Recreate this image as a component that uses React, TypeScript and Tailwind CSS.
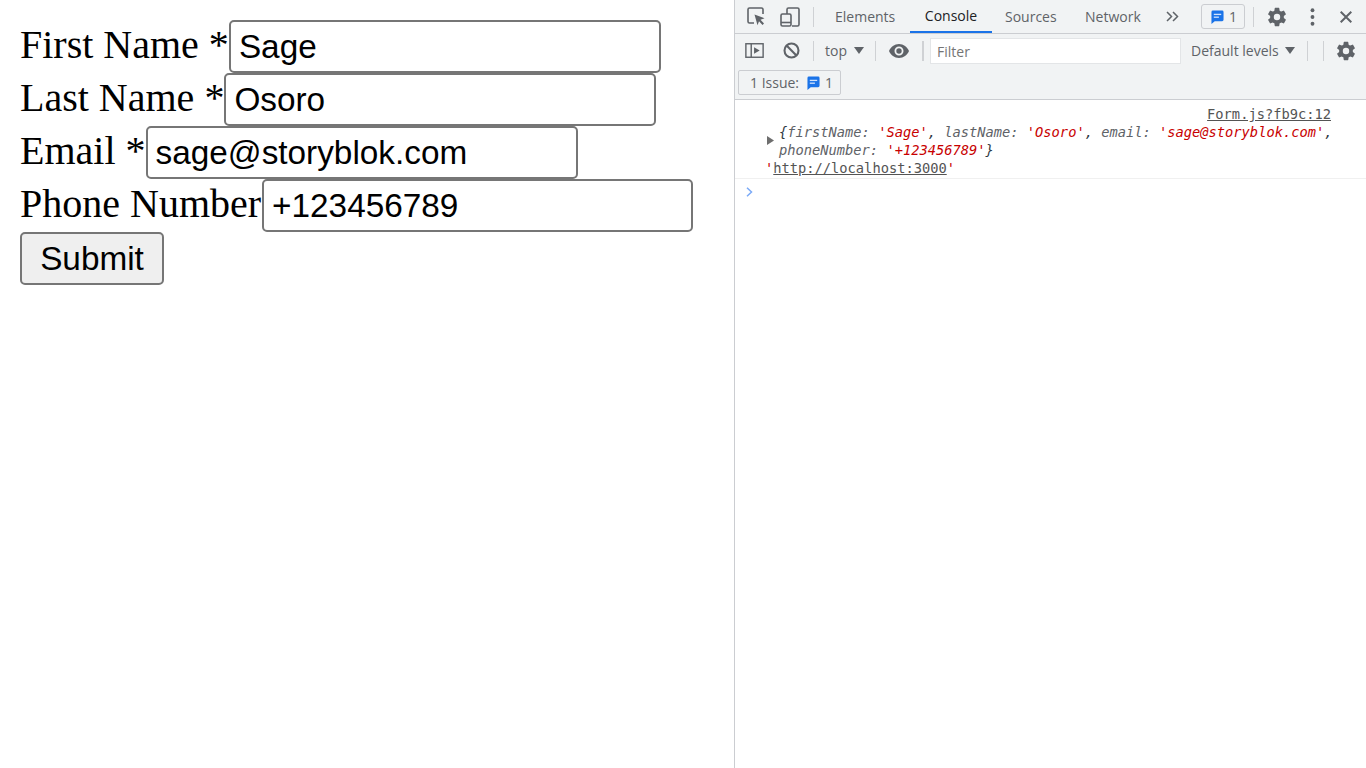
import React from "react";

const Msg = ({ className = "" }: { className?: string }) => (
  <svg viewBox="0 0 14 15" className={className}>
    <path d="M2 0.5h10a1.5 1.5 0 0 1 1.5 1.5v8.5a1.5 1.5 0 0 1-1.5 1.5H4l-3.5 3V2A1.5 1.5 0 0 1 2 0.5z" fill="#1a73e8" />
    <rect x="3" y="4" width="8" height="1.4" fill="#d2e3fc" />
    <rect x="3" y="7" width="5.5" height="1.4" fill="#d2e3fc" />
  </svg>
);

const Gear = ({ className = "" }: { className?: string }) => (
  <svg viewBox="0 0 24 24" className={className} fill="#5f6368">
    <path d="M19.43 12.98c.04-.32.07-.64.07-.98s-.03-.66-.07-.98l2.11-1.65a.5.5 0 0 0 .12-.64l-2-3.46a.5.5 0 0 0-.61-.22l-2.49 1a7.3 7.3 0 0 0-1.69-.98l-.38-2.65A.49.49 0 0 0 14 2h-4a.49.49 0 0 0-.49.42l-.38 2.65c-.61.25-1.17.59-1.69.98l-2.49-1a.49.49 0 0 0-.61.22l-2 3.46a.49.49 0 0 0 .12.64l2.11 1.65c-.04.32-.07.65-.07.98s.03.66.07.98l-2.11 1.65a.5.5 0 0 0-.12.64l2 3.46c.12.22.39.3.61.22l2.49-1c.52.4 1.08.73 1.69.98l.38 2.65c.03.24.24.42.49.42h4c.25 0 .46-.18.49-.42l.38-2.65c.61-.25 1.17-.59 1.69-.98l2.49 1c.23.09.49 0 .61-.22l2-3.46a.5.5 0 0 0-.12-.64l-2.11-1.65zM12 15.5a3.5 3.5 0 1 1 0-7 3.5 3.5 0 0 1 0 7z" />
  </svg>
);

const Sep = ({ ml, h = "h-[20px]", w = "w-px", color = "bg-[#cfd1d4]" }: { ml: string; h?: string; w?: string; color?: string }) => (
  <div className={`${ml} ${h} ${w} ${color} shrink-0`} />
);

const Field = ({ label, value, inputW }: { label: string; value: string; inputW: string }) => (
  <div className="flex items-center h-[53px]">
    <span className="text-[40px] leading-[49px] mb-[4px] text-black whitespace-nowrap">{label}</span>
    <input
      readOnly
      value={value}
      className={`${inputW} h-[53px] box-border border-2 border-[#767676] rounded-[5px] px-[8px] text-[33.33px] text-black bg-white outline-none font-['Liberation_Sans',sans-serif]`}
    />
  </div>
);

export default function App() {
  return (
    <div className="flex w-[1366px] h-[768px] overflow-hidden bg-white">
      <div className="w-[734px] shrink-0 pt-[20px] pl-[20px] font-['Liberation_Serif',serif]">
        <Field label="First Name *" value="Sage" inputW="w-[432px]" />
        <Field label="Last Name *" value="Osoro" inputW="w-[432px]" />
        <Field label="Email *" value="sage@storyblok.com" inputW="w-[432px]" />
        <Field label="Phone Number" value="+123456789" inputW="w-[431px] ml-[1px]" />
        <button className="w-[144px] h-[53px] box-border border-2 border-[#767676] rounded-[5px] bg-[#efefef] text-[33.33px] leading-none text-black font-['Liberation_Sans',sans-serif]">
          Submit
        </button>
      </div>

      <div className="w-[632px] shrink-0 border-l border-[#cbcdd1] flex flex-col font-['Open_Sans',sans-serif] text-[#5f6368]">
        {/* Tabs row */}
        <div className="h-[34px] shrink-0 bg-[#f1f3f4] border-b border-[#cbcdd1] flex items-center">
          <svg viewBox="0 0 19 19" className="ml-[12px] w-[19px] h-[19px] shrink-0" fill="none">
            <path d="M7 16H2.5A1.5 1.5 0 0 1 1 14.5v-12A1.5 1.5 0 0 1 2.500 1h12A1.500 1.500 0 0 1 16 2.500V7" stroke="#5f6368" strokeWidth="1.6" />
            <path d="M7.500 7.500l10 3.800-4 1.500 3.500 3.600-1.500 1.500-3.500-3.600-1.500 4z" fill="#5f6368" />
          </svg>
          <svg viewBox="0 0 20 20" className="ml-[14px] w-[20px] h-[20px] shrink-0" fill="none" stroke="#5f6368" strokeWidth="1.6">
            <path d="M7 7V2.500A1.500 1.500 0 0 1 8.500 1h9A1.500 1.500 0 0 1 19 2.500v15a1.500 1.500 0 0 1-1.500 1.500H12" />
            <rect x="1" y="7" width="10" height="12" rx="1.500" />
            <path d="M1 15.500h10" />
          </svg>
          <Sep ml="ml-[13px]" />
          <span className="ml-[21px] text-[14px] whitespace-nowrap w-[61px]">Elements</span>
          <div className="ml-[14px] w-[82px] h-[33px] border-b-2 border-[#1a73e8] flex items-center justify-center text-[14px] text-[#202124] shrink-0">
            Console
          </div>
          <span className="ml-[13px] text-[14px] w-[54px] whitespace-nowrap">Sources</span>
          <span className="ml-[26px] text-[14px] w-[58px] whitespace-nowrap">Network</span>
          <svg viewBox="0 0 13 11" className="ml-[23px] w-[13px] h-[11px] shrink-0" fill="none" stroke="#5f6368" strokeWidth="1.500">
            <path d="M1 1l4.500 4.500L1 10M7 1l4.500 4.500L7 10" />
          </svg>
          <div className="ml-[22px] w-[44px] h-[25px] border border-[#cbcdd1] rounded-[3px] flex items-center shrink-0">
            <Msg className="ml-[9px] w-[13px] h-[14px]" />
            <span className="ml-[5px] text-[14px] leading-none">1</span>
          </div>
          <Sep ml="ml-[8px]" />
          <Gear className="ml-[12px] w-[22px] h-[22px] shrink-0" />
          <svg viewBox="0 0 4 16" className="ml-[22px] w-[5px] h-[18px] shrink-0" fill="#5f6368">
            <circle cx="2" cy="2" r="1.700" />
            <circle cx="2" cy="8" r="1.700" />
            <circle cx="2" cy="14" r="1.700" />
          </svg>
          <svg viewBox="0 0 12 12" className="ml-[25px] w-[12px] h-[12px] shrink-0" fill="none" stroke="#5f6368" strokeWidth="2">
            <path d="M0.700 0.700l10.600 10.600M11.300 0.700L0.700 11.300" />
          </svg>
        </div>

        {/* Filter row */}
        <div className="h-[33px] shrink-0 bg-[#f1f3f4] flex items-center">
          <svg viewBox="0 0 20 16" className="ml-[10px] w-[19px] h-[15px] shrink-0" fill="none">
            <rect x="0.800" y="0.800" width="18.400" height="14.400" stroke="#5f6368" strokeWidth="1.500" />
            <path d="M6.500 0.800v14.400" stroke="#5f6368" strokeWidth="1.500" />
            <path d="M9.500 4.500l6 3.500-6 3.500z" fill="#5f6368" />
          </svg>
          <svg viewBox="0 0 18 18" className="ml-[19px] w-[17px] h-[17px] shrink-0" fill="none" stroke="#5f6368" strokeWidth="2.200">
            <circle cx="9" cy="9" r="7.400" />
            <path d="M3.800 3.800l10.400 10.400" />
          </svg>
          <Sep ml="ml-[13px]" />
          <span className="ml-[11px] text-[14px] w-[29px] leading-none">top</span>
          <svg viewBox="0 0 10 7" className="w-[10px] h-[7px] shrink-0" fill="#5f6368"><path d="M0 0h10L5 7z" /></svg>
          <Sep ml="ml-[11px]" />
          <svg viewBox="0 0 20 14" className="ml-[13px] w-[20px] h-[14px] shrink-0" fill="#5f6368">
            <path fillRule="evenodd" d="M10 0C5.500 0 1.700 2.900 0 7c1.700 4.100 5.500 7 10 7s8.300-2.900 10-7c-1.700-4.100-5.500-7-10-7zm0 11.500a4.500 4.500 0 1 1 0-9 4.500 4.500 0 0 1 0 9z" />
            <circle cx="10" cy="7" r="2.700" />
          </svg>
          <Sep ml="ml-[13px]" w="w-[2px]" />
          <div className="ml-[6px] w-[251px] h-[26px] bg-white border border-[#e3e5e7] shrink-0 flex items-center pl-[6px] pt-[1px] text-[14px] text-[#757575]">
            Filter
          </div>
          <span className="ml-[10px] w-[94px] text-[14px] whitespace-nowrap">Default levels</span>
          <svg viewBox="0 0 10 7" className="w-[10px] h-[7px] shrink-0" fill="#5f6368"><path d="M0 0h10L5 7z" /></svg>
          <Sep ml="ml-[12px]" />
          <Sep ml="ml-[15px]" />
          <Gear className="ml-[11px] w-[22px] h-[22px] shrink-0" />
        </div>

        {/* Issues row */}
        <div className="h-[33px] shrink-0 bg-[#f1f3f4] border-b border-[#cbcdd1] flex items-start pt-[3px] pl-[3px]">
          <div className="w-[103px] h-[25px] border border-[#cbcdd1] rounded-[2px] flex items-center text-[14px]">
            <span className="ml-[11px] w-[57px] whitespace-nowrap">1 Issue:</span>
            <Msg className="w-[13px] h-[14px]" />
            <span className="ml-[5px] leading-none">1</span>
          </div>
        </div>

        {/* Messages */}
        <div className="font-['DejaVu_Sans_Mono',monospace] text-[13.73px] leading-[18px] text-[#303942] border-b border-[#f0f0f0] h-[79px] shrink-0 bg-white pt-[5px]">
          <div className="flex justify-end pr-[35px]">
            <span className="underline text-[#545454]">Form.js?fb9c:12</span>
          </div>
          <div className="flex">
            <svg viewBox="0 0 7 9" className="ml-[32px] mt-[13px] w-[7px] h-[9px] shrink-0" fill="#6e6e6e"><path d="M0 0l7 4.500L0 9z" /></svg>
            <div className="ml-[5px] italic whitespace-pre">
              <div>
                <span>{"{"}</span><span className="text-[#5f6368]">firstName: </span><span className="text-[#c80000]">'Sage'</span>, <span className="text-[#5f6368]">lastName: </span><span className="text-[#c80000]">'Osoro'</span>, <span className="text-[#5f6368]">email: </span><span className="text-[#c80000]">'sage@storyblok.com'</span>,
              </div>
              <div>
                <span className="text-[#5f6368]">phoneNumber: </span><span className="text-[#c80000]">'+123456789'</span>{"}"}
              </div>
            </div>
          </div>
          <div className="ml-[30px] whitespace-pre text-[#c80000]">
            '<span className="underline text-[#545454]">http://localhost:3000</span>'
          </div>
        </div>
        <div className="bg-white pl-[11px] pt-[8px]">
          <svg viewBox="0 0 7 10" className="w-[7px] h-[10px]" fill="none" stroke="#7baaf7" strokeWidth="1.500"><path d="M1 0.800L5.500 5 1 9.200" /></svg>
        </div>
      </div>
    </div>
  );
}
